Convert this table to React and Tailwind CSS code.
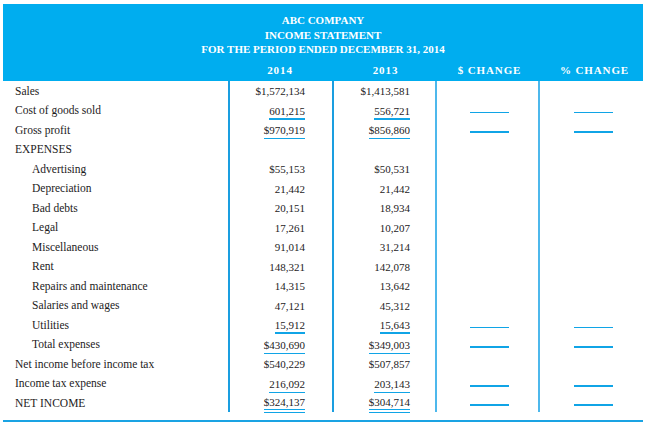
import React from "react";

const rows = [
  { label: "Sales", a: "$1,572,134", b: "$1,413,581" },
  { label: "Cost of goods sold", a: "601,215", b: "556,721", ul: "thick", dash: "thin" },
  { label: "Gross profit", a: "$970,919", b: "$856,860", ul: "thin", dash: "thick" },
  { label: "EXPENSES" },
  { label: "Advertising", indent: true, a: "$55,153", b: "$50,531" },
  { label: "Depreciation", indent: true, a: "21,442", b: "21,442" },
  { label: "Bad debts", indent: true, a: "20,151", b: "18,934" },
  { label: "Legal", indent: true, a: "17,261", b: "10,207" },
  { label: "Miscellaneous", indent: true, a: "91,014", b: "31,214" },
  { label: "Rent", indent: true, a: "148,321", b: "142,078" },
  { label: "Repairs and maintenance", indent: true, a: "14,315", b: "13,642" },
  { label: "Salaries and wages", indent: true, a: "47,121", b: "45,312" },
  { label: "Utilities", indent: true, a: "15,912", b: "15,643", ul: "thick", dash: "thin" },
  { label: "Total expenses", indent: true, a: "$430,690", b: "$349,003", ul: "thin", dash: "thick" },
  { label: "Net income before income tax", a: "$540,229", b: "$507,857" },
  { label: "Income tax expense", a: "216,092", b: "203,143", ul: "thin", dash: "thick" },
  { label: "NET INCOME", a: "$324,137", b: "$304,714", ul: "double", dash: "thick" },
];

function Num({ v, ul }) {
  if (!v) return null;
  let cls = "inline-block leading-[12px] ";
  if (ul === "thick") cls += "border-b-2 border-[#10a4e6] pb-[1px]";
  else if (ul === "thin") cls += "border-b border-[#10a4e6] pb-[2px]";
  else if (ul === "double") cls += "border-b-[4px] border-double border-[#10a4e6] pb-[1px]";
  else cls += "pb-[3px]";
  return <span className={cls}>{v}</span>;
}

function Dash({ d }) {
  if (!d) return null;
  return (
    <span
      className={
        "inline-block w-[39px] mt-[6px] " +
        (d === "thick" ? "border-b-2 border-[#10a4e6]" : "border-b border-[#10a4e6]")
      }
    />
  );
}

export default function App() {
  const font = { fontFamily: '"Liberation Serif", "Times New Roman", serif' };
  return (
    <div className="w-[648px] h-[427px] bg-white pl-[3px] pt-[4px]" style={font}>
      <div className="w-[640px]">
        <div className="bg-[#00adef] text-white font-bold text-center text-[11px] pt-[9px]">
          <div className="leading-[14.5px]">ABC COMPANY</div>
          <div className="leading-[14.5px]">INCOME STATEMENT</div>
          <div className="leading-[14.5px]">FOR THE PERIOD ENDED DECEMBER 31, 2014</div>
          <div className="flex h-[21px] mt-[3px] items-center tracking-[0.9px] text-[11px]">
            <div className="w-[225px]" />
            <div className="w-[104px]">2014</div>
            <div className="w-[103px] pl-[4px]">2013</div>
            <div className="w-[103px] pl-[6px]">$ CHANGE</div>
            <div className="w-[105px] pl-[8px]">% CHANGE</div>
          </div>
        </div>
        <div className="flex border-b-2 border-[#1aa3e3] text-[11px] text-[#1d1b1c] pb-[8px]">
          <div className="w-[225px] flex flex-col text-[11.5px]">
            {rows.map((r, i) => (
              <div
                key={i}
                className={"h-[19.5px] flex items-center pt-[2px] " + (r.indent ? "pl-[29px]" : "pl-[12px]")}
              >
                {r.label}
              </div>
            ))}
          </div>
          <div className="w-[104px] flex flex-col border-l-2 border-[#1a9ee0]">
            {rows.map((r, i) => (
              <div key={i} className="h-[19.5px] flex items-center justify-end pr-[27px] pt-[5px]">
                <Num v={r.a} ul={r.ul} />
              </div>
            ))}
          </div>
          <div className="w-[103px] flex flex-col border-l-2 border-[#1a9ee0]">
            {rows.map((r, i) => (
              <div key={i} className="h-[19.5px] flex items-center justify-end pr-[25px] pt-[5px]">
                <Num v={r.b} ul={r.ul} />
              </div>
            ))}
          </div>
          <div className="w-[103px] flex flex-col border-l-2 border-[#4db8ec]">
            {rows.map((r, i) => (
              <div key={i} className="h-[19.5px] flex items-center justify-end pr-[29px]">
                <Dash d={r.dash} />
              </div>
            ))}
          </div>
          <div className="w-[105px] flex flex-col border-l-2 border-[#4db8ec]">
            {rows.map((r, i) => (
              <div key={i} className="h-[19.5px] flex items-center justify-end pr-[30px]">
                <Dash d={r.dash} />
              </div>
            ))}
          </div>
        </div>
      </div>
    </div>
  );
}
